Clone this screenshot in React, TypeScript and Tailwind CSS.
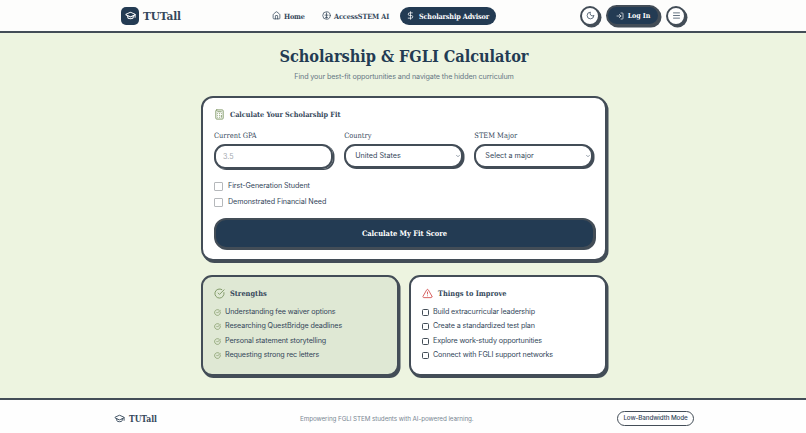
import {
    House,
    DollarSign,
    GraduationCap,
    Moon,
    LogIn,
    Menu,
    Calculator,
    CircleCheckBig,
    TriangleAlert,
    ChevronDown,
} from 'lucide-react';

const strengths = [
    'Understanding fee waiver options',
    'Researching QuestBridge deadlines',
    'Personal statement storytelling',
    'Requesting strong rec letters',
];

const improvements = [
    'Build extracurricular leadership',
    'Create a standardized test plan',
    'Explore work-study opportunities',
    'Connect with FGLI support networks',
];

function BrainIcon() {
    return (
        <svg viewBox="0 0 24 24" className="h-[9px] w-[9px]" fill="none" stroke="currentColor" strokeWidth="2" strokeLinecap="round">
            <circle cx="12" cy="12" r="10" />
            <path d="M12 5v14M8 11h8M9 17h6" />
        </svg>
    );
}

function Header() {
    return (
        <header className="flex h-[33px] shrink-0 items-center border-b-2 border-[#434d57] bg-[#fdfdfc] pl-[121px]">
            <div className="flex w-[151px] items-center gap-[4px]">
                <div className="flex h-[18px] w-[18px] items-center justify-center rounded-[5px] bg-[#233b53] text-white">
                    <GraduationCap className="h-[11px] w-[11px]" strokeWidth={2.2} />
                </div>
                <span className="pt-px font-['DejaVu_Serif',serif] text-[10.5px] leading-[14px] font-bold tracking-[-0.1px]">TUTall</span>
            </div>
            <nav className="flex w-[308px] items-center font-['DejaVu_Serif_Condensed','DejaVu_Serif',serif] text-[7.2px] leading-[10px] font-bold whitespace-nowrap">
                <a className="flex w-[50px] items-center gap-[3px] tracking-[-0.2px]">
                    <House className="h-[9px] w-[9px]" />
                    <span className="pt-[2px]">Home</span>
                </a>
                <a className="flex w-[78px] items-center gap-[3px]">
                    <BrainIcon />
                    <span className="pt-[2px] tracking-[-0.07px]">AccessSTEM AI</span>
                </a>
                <a className="flex h-[18px] w-[96px] items-center gap-[4px] rounded-full bg-[#233b53] pl-[6px] text-white">
                    <DollarSign className="h-[9px] w-[9px]" />
                    <span className="pt-[2px] tracking-[-0.12px]">Scholarship Advisor</span>
                </a>
            </nav>
            <div className="flex items-center gap-[6px]">
                <button className="flex h-[20px] w-[20px] items-center justify-center rounded-full border-2 border-[#434d57] bg-white shadow-[1.5px_1.5px_0_#434d57]">
                    <Moon className="h-[9px] w-[9px]" />
                </button>
                <button className="flex h-[21px] w-[54px] items-center justify-center gap-[4px] rounded-full border-2 border-[#434d57] bg-[#233b53] font-['DejaVu_Serif_Condensed','DejaVu_Serif',serif] text-[7px] leading-[10px] font-bold text-white shadow-[1.5px_1.5px_0_#434d57]">
                    <LogIn className="h-[8px] w-[8px]" />
                    <span className="pt-px">Log In</span>
                </button>
                <button className="flex h-[20px] w-[20px] items-center justify-center rounded-full border-2 border-[#434d57] bg-white shadow-[1.5px_1.5px_0_#434d57]">
                    <Menu className="h-[9px] w-[9px]" />
                </button>
            </div>
        </header>
    );
}

function FieldLabel({ text }: { text: string }) {
    return (
        <div className="mb-[3px] h-[10px] font-['DejaVu_Serif_Condensed','DejaVu_Serif',serif] text-[7.4px] leading-[10px]">{text}</div>
    );
}

function SelectField({ label, value }: { label: string; value: string }) {
    return (
        <div className="w-[120px]">
            <FieldLabel text={label} />
            <div className="flex h-[24px] w-[119px] items-center justify-between rounded-[11px] border-2 border-[#434d57] bg-white pl-[9px] text-[7.2px] shadow-[1.5px_1px_0_#434d57]">
                <span className="pt-px">{value}</span>
                <ChevronDown className="h-[6px] w-[6px]" />
            </div>
        </div>
    );
}

function Checkbox({ label }: { label: string }) {
    return (
        <label className="flex h-[10px] items-center gap-[5px] text-[7.2px] tracking-[-0.08px]">
            <span className="h-[9px] w-[9px] rounded-[1px] border border-[#b5b8bb] bg-white" />
            {label}
        </label>
    );
}

export default function App() {
    return (
        <div className="flex h-[433px] w-[806px] flex-col overflow-hidden bg-[#edf4e0] font-['Inter',sans-serif] text-[#34475a]">
            <Header />

            <main className="ml-[201px] w-[406px] flex-1 pt-[12px]">
                <h1 className="h-[24px] text-center font-['DejaVu_Serif_Condensed','DejaVu_Serif',serif] text-[16.2px] leading-[24px] font-bold tracking-[-0.04px] whitespace-nowrap text-[#233b53]">
                    Scholarship &amp; FGLI Calculator
                </h1>
                <p className="mt-[2px] h-[11px] text-center text-[7.2px] leading-[11px] tracking-[-0.12px] text-[#667784]">
                    Find your best-fit opportunities and navigate the hidden curriculum
                </p>

                <section className="mt-[14px] h-[165px] rounded-[12px] border-2 border-[#434d57] bg-white px-[11px] pt-[11px] shadow-[1.5px_2px_0_#434d57]">
                    <div className="flex h-[11px] items-center gap-[5px]">
                        <Calculator className="h-[11px] w-[11px] text-[#7c9561]" />
                        <h2 className="font-['DejaVu_Serif_Condensed','DejaVu_Serif',serif] text-[7.2px] leading-[10px] font-bold">Calculate Your Scholarship Fit</h2>
                    </div>
                    <div className="mt-[11px] flex gap-[10.500px]">
                        <div className="w-[120px]">
                            <FieldLabel text="Current GPA" />
                            <div className="flex h-[25px] w-[119px] items-center rounded-[11px] border-2 border-[#434d57] pt-[1px] pl-[7px] text-[7.2px] text-[#a5aab0] shadow-[1.5px_1px_0_#434d57]">3.5</div>
                        </div>
                        <SelectField label="Country" value="United States" />
                        <SelectField label="STEM Major" value="Select a major" />
                    </div>
                    <div className="mt-[12px] flex flex-col gap-[6px]">
                        <Checkbox label="First-Generation Student" />
                        <Checkbox label="Demonstrated Financial Need" />
                    </div>
                    <button className="mt-[11px] flex h-[31px] w-[381px] items-center justify-center rounded-[12px] border-2 border-[#434d57] bg-[#233b53] font-['DejaVu_Serif_Condensed','DejaVu_Serif',serif] text-[7.5px] font-bold tracking-[-0.03px] text-white shadow-[1px_1px_0_#434d57]">
                        Calculate My Fit Score
                    </button>
                </section>

                <div className="mt-[14px] flex gap-[10px]">
                    <section className="h-[101px] w-[198px] rounded-[11px] border-2 border-[#434d57] bg-[#dfe8d4] px-[11px] pt-[11px] shadow-[1.5px_2px_0_#434d57]">
                        <div className="flex h-[11px] items-center gap-[5px]">
                            <CircleCheckBig className="h-[11px] w-[11px] text-[#7c9561]" />
                            <h2 className="pt-px font-['DejaVu_Serif_Condensed','DejaVu_Serif',serif] text-[7.4px] leading-[10px] font-bold">Strengths</h2>
                        </div>
                        <ul className="mt-[6px] text-[7.2px] tracking-[-0.13px]">
                            {strengths.map((item) => (
                                <li key={item} className="flex h-[14.500px] items-center gap-[4px]">
                                    <CircleCheckBig className="h-[7px] w-[7px] text-[#7c9561]" strokeWidth={2.4} />
                                    {item}
                                </li>
                            ))}
                        </ul>
                    </section>
                    <section className="h-[101px] w-[198px] rounded-[11px] border-2 border-[#434d57] bg-white px-[11px] pt-[11px] shadow-[1.5px_2px_0_#434d57]">
                        <div className="flex h-[11px] items-center gap-[5px]">
                            <TriangleAlert className="h-[11px] w-[11px] text-[#d45656]" />
                            <h2 className="pt-px font-['DejaVu_Serif_Condensed','DejaVu_Serif',serif] text-[7.4px] leading-[10px] font-bold">Things to Improve</h2>
                        </div>
                        <ul className="mt-[6px] text-[7.2px] tracking-[-0.13px]">
                            {improvements.map((item) => (
                                <li key={item} className="flex h-[14.500px] items-center gap-[4px]">
                                    <span className="h-[7px] w-[7px] rounded-[1.5px] border border-[#434d57]" />
                                    {item}
                                </li>
                            ))}
                        </ul>
                    </section>
                </div>
            </main>

            <footer className="flex h-[35px] shrink-0 items-center border-t-2 border-[#434d57] bg-[#fefefe] pt-[4px] pl-[114px]">
                <div className="flex w-[186px] items-center gap-[4px]">
                    <GraduationCap className="h-[11px] w-[11px]" />
                    <span className="pt-px font-['DejaVu_Serif_Condensed','DejaVu_Serif',serif] text-[8.5px] font-bold">TUTall</span>
                </div>
                <p className="w-[317px] pt-[2px] text-[6.300px] tracking-[-0.08px] text-[#7a8793]">Empowering FGLI STEM students with AI-powered learning.</p>
                <button className="h-[15px] w-[77px] rounded-full border border-[#434d57] pt-px text-[6.300px] font-medium tracking-[-0.12px] whitespace-nowrap">
                    Low-Bandwidth Mode
                </button>
            </footer>
        </div>
    );
}
